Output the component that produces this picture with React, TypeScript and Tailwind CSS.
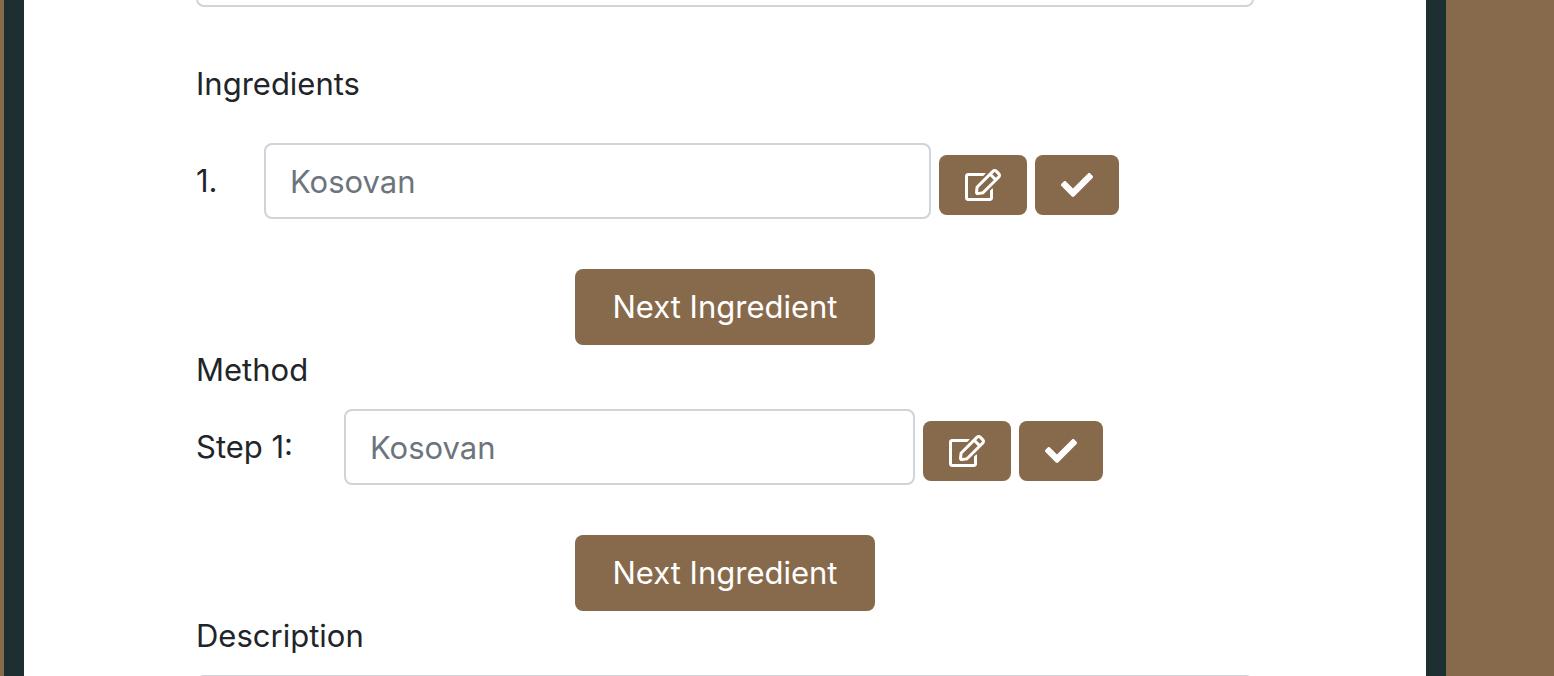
import { FaCheck, FaRegEdit } from "react-icons/fa";

const fieldClass =
  "block h-[76px] rounded-lg border-2 border-[#ced4da] bg-white px-6 text-[31px] leading-[48px] text-[#212529] placeholder:text-[#6c757d] placeholder:opacity-100";

function EntryRow({
  id,
  label,
  labelClass,
  inputClass,
}: {
  id: string;
  label: string;
  labelClass: string;
  inputClass: string;
}) {
  return (
    <div className="flex items-center gap-2">
      <div className={`flex items-center ${inputClass}`}>
        <label htmlFor={id} className={`shrink-0 ${labelClass}`}>
          {label}
        </label>
        <input id={id} type="text" placeholder="Kosovan" className={`min-w-0 flex-1 ${fieldClass}`} />
      </div>
      <button
        type="button"
        aria-label="Edit"
        className="mt-2 flex h-[60px] w-[88px] shrink-0 items-center justify-center rounded-lg bg-[#876a4b] text-white"
      >
        <FaRegEdit className="h-8 w-9" />
      </button>
      <button
        type="button"
        aria-label="Confirm"
        className="mt-2 flex h-[60px] w-[84px] shrink-0 items-center justify-center rounded-lg bg-[#876a4b] text-white"
      >
        <FaCheck className="size-8" />
      </button>
    </div>
  );
}

function NextButton() {
  return (
    <div className="mt-[50px] flex justify-center">
      <button type="button" className="h-[76px] w-[300px] rounded-lg bg-[#876a4b] text-[31px] leading-[48px] text-white">
        Next Ingredient
      </button>
    </div>
  );
}

export default function App() {
  return (
    <div className="flex h-screen overflow-hidden bg-[#876a4b] pr-[108px] pl-1 font-['Inter',sans-serif] text-[31px] leading-[48px] text-[#212529]">
      <main className="min-w-0 flex-1 border-x-20 border-[#1e2f31] bg-white px-[172px]">
        <form>
          <input type="text" aria-label="Recipe name" className={`-mt-[69px] w-full ${fieldClass}`} />
          <h2 className="mt-[53px]">Ingredients</h2>
          <div className="mt-[35px]">
            <EntryRow id="ingredient-1" label="1." labelClass="w-[68px]" inputClass="w-[69.5%]" />
          </div>
          <NextButton />
          <h2 className="mt-px">Method</h2>
          <div className="mt-[15px]">
            <EntryRow id="step-1" label="Step 1:" labelClass="w-[148px]" inputClass="w-[68%]" />
          </div>
          <NextButton />
          <label htmlFor="description" className="mt-px block">
            Description
          </label>
          <textarea
            id="description"
            className="mt-[15px] block h-[172px] w-full resize-none rounded-lg border-2 border-[#ced4da] bg-white px-6 py-3"
          />
        </form>
      </main>
    </div>
  );
}
